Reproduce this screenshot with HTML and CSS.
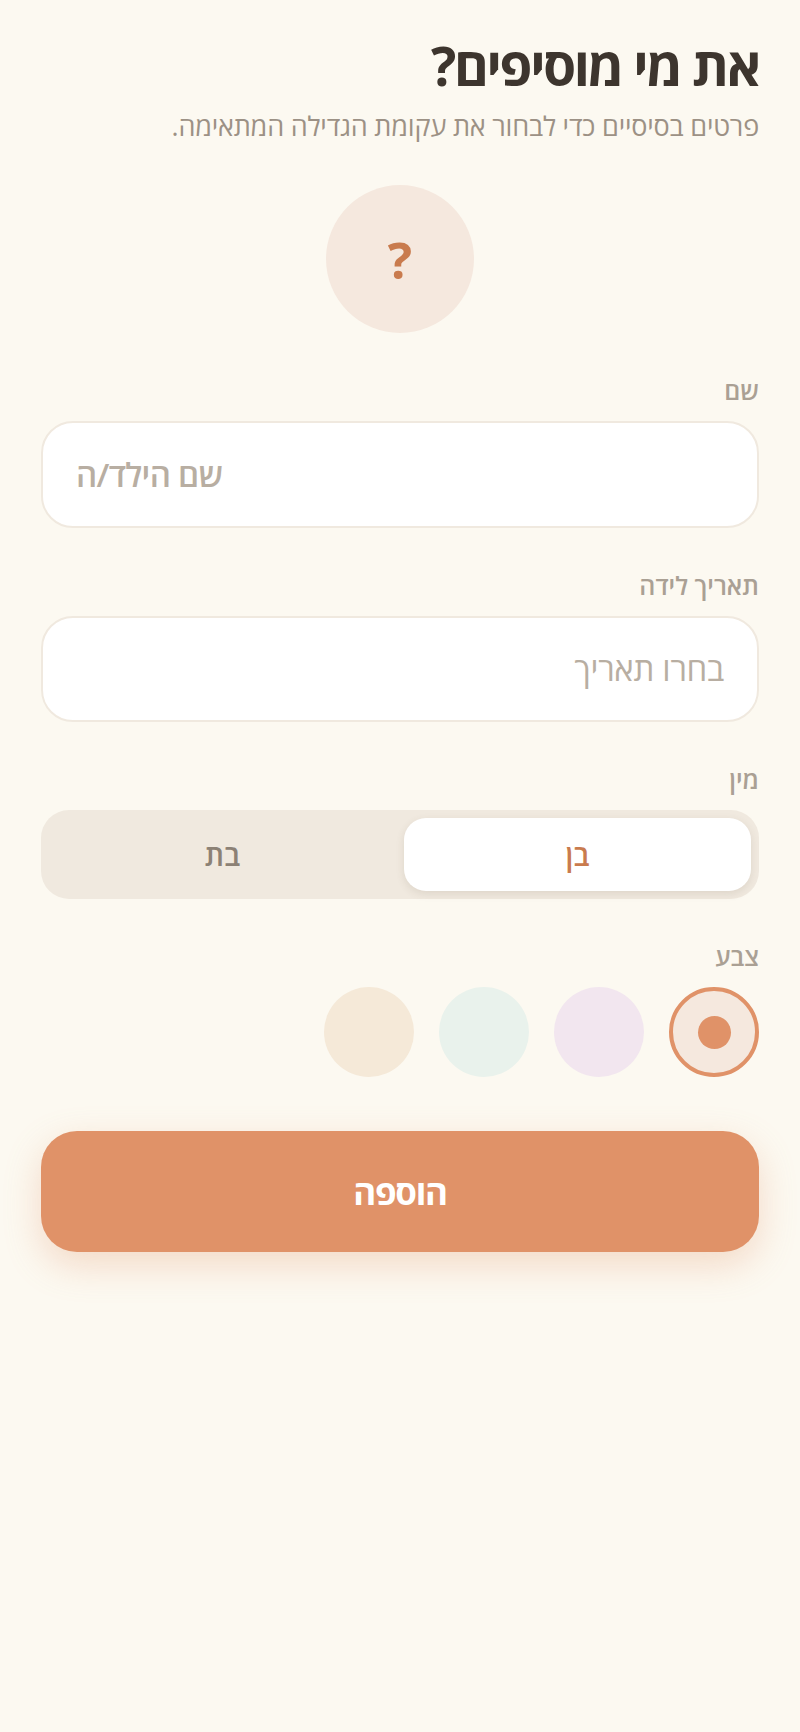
FILE: index.html
```html
<!DOCTYPE html>
<html lang="he" dir="rtl">
<head>
    <meta charset="UTF-8">
    <meta name="viewport" content="width=device-width, initial-scale=1.0">
    <title>הוספת ילד/ה</title>
    <link rel="stylesheet" href="styles.css">
</head>
<body>
    <main class="page">
        <h1 class="title">את מי מוסיפים?</h1>
        <p class="subtitle">פרטים בסיסיים כדי לבחור את עקומת הגדילה המתאימה.</p>

        <div class="avatar">?</div>

        <div class="label">שם</div>
        <div class="field field-name">שם הילד/ה</div>

        <div class="label">תאריך לידה</div>
        <div class="field field-date">בחרו תאריך</div>

        <div class="label">מין</div>
        <div class="toggle">
            <div class="toggle-option active">בן</div>
            <div class="toggle-option">בת</div>
        </div>

        <div class="label">צבע</div>
        <div class="swatches">
            <div class="swatch swatch-peach selected"><span class="swatch-dot"></span></div>
            <div class="swatch swatch-lilac"></div>
            <div class="swatch swatch-mint"></div>
            <div class="swatch swatch-sand"></div>
        </div>

        <button class="submit">הוספה</button>
    </main>
</body>
</html>
```

FILE: styles.css
```css
* {
    box-sizing: border-box;
}
body {
    margin: 0;
    background-color: #fcf9f1;
    font-family: "Open Sans", "Noto Sans", sans-serif;
}
.page {
    padding: 41px 41px 0;
    min-height: 1732px;
}
.title {
    margin: 0;
    font-size: 53px;
    line-height: 50px;
    font-weight: 700;
    letter-spacing: -2.3px;
    color: #3d352e;
}
.subtitle {
    margin: 16px 0 0;
    font-size: 27px;
    line-height: 38px;
    letter-spacing: -0.2px;
    color: #9c9185;
}
.avatar {
    width: 148px;
    height: 148px;
    margin: 40px auto 1px;
    border-radius: 50%;
    background-color: #f5e8de;
    color: #c97b4e;
    font-size: 51px;
    font-weight: 700;
    display: flex;
    align-items: center;
    justify-content: center;
}
.label {
    margin-top: 40px;
    font-size: 25px;
    line-height: 34px;
    font-weight: 600;
    color: #aaa094;
}
.field {
    height: 106.5px;
    margin-top: 14px;
    padding: 0 33px;
    display: flex;
    align-items: center;
    background-color: #fff;
    border: 2px solid #f0e9df;
    border-radius: 32px;
    font-size: 33px;
    color: #b8aea2;
}
.field-name {
    justify-content: flex-end;
    font-weight: 600;
    letter-spacing: -0.7px;
}
.field-date {
    letter-spacing: -0.3px;
}
.toggle {
    display: flex;
    gap: 8px;
    height: 89px;
    margin-top: 14px;
    padding: 8px;
    background-color: #f0e9df;
    border-radius: 28px;
}
.toggle-option {
    flex: 1;
    display: flex;
    align-items: center;
    justify-content: center;
    border-radius: 22px;
    font-size: 29px;
    font-weight: 600;
    color: #8c8175;
}
.toggle-option.active {
    background-color: #fff;
    color: #c97b4e;
    box-shadow: 0 3px 8px rgba(90, 70, 50, 0.12);
}
.swatches {
    display: flex;
    gap: 25px;
    margin-top: 14px;
}
.swatch {
    width: 90px;
    height: 90px;
    border-radius: 50%;
    display: flex;
    align-items: center;
    justify-content: center;
}
.swatch.selected {
    border: 4px solid #e09268;
}
.swatch-peach {
    background-color: #f5e8de;
}
.swatch-lilac {
    background-color: #f2e6ef;
}
.swatch-mint {
    background-color: #e9f2ec;
}
.swatch-sand {
    background-color: #f5e9d8;
}
.swatch-dot {
    width: 33px;
    height: 33px;
    border-radius: 50%;
    background-color: #e09268;
}
.submit {
    display: block;
    width: 100%;
    height: 121px;
    margin-top: 54px;
    border: none;
    border-radius: 36px;
    background-color: #e09268;
    box-shadow: 0 13px 36px rgba(224, 146, 104, 0.3);
    color: #fff;
    font-family: inherit;
    font-size: 35px;
    font-weight: 700;
    letter-spacing: -1.3px;
}
```
